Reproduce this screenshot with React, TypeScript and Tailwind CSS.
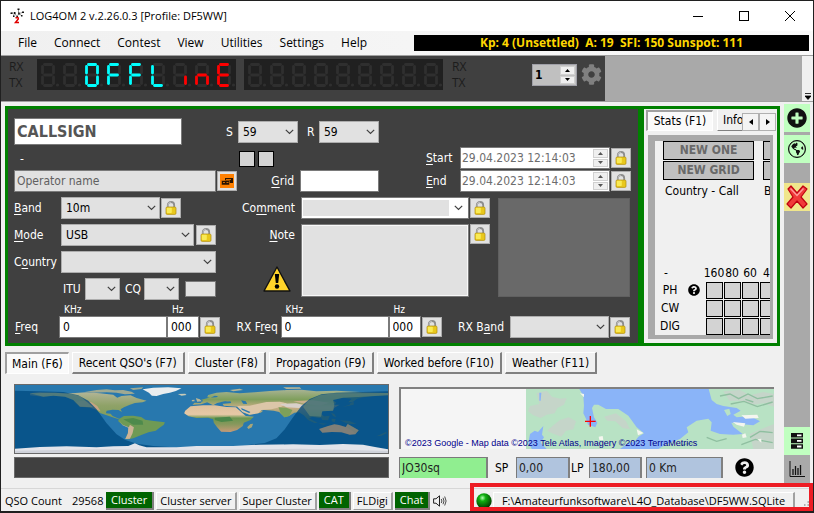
import React from "react";
import { FaCog, FaGlobeAmericas, FaPlusCircle, FaQuestionCircle } from "react-icons/fa";

const tahoma = "font-['DejaVu_Sans_Condensed','DejaVu_Sans',sans-serif]";
const segoe = "font-['Open_Sans','Noto_Sans',sans-serif]";

/* ---------- seven segment display ---------- */

const SEGMENTS: Record<string, string> = {
  a: "M3.5 1.5H10.5",
  b: "M12.5 3.5V10",
  c: "M12.5 14V20.5",
  d: "M3.5 22.5H10.5",
  e: "M1.5 14V20.5",
  f: "M1.5 3.5V10",
  g: "M3.5 12H10.5",
};

type Digit = { lit: string; color: string };

const OFFLINE: Digit[] = [
  { lit: "", color: "" },
  { lit: "", color: "" },
  { lit: "abcdef", color: "#00ffff" },
  { lit: "aefg", color: "#00ffff" },
  { lit: "aefg", color: "#00ffff" },
  { lit: "def", color: "#00ffff" },
  { lit: "c", color: "#ff0000" },
  { lit: "ceg", color: "#ff0000" },
  { lit: "adefg", color: "#ff0000" },
];
const BLANK: Digit[] = Array.from({ length: 9 }, () => ({ lit: "", color: "" }));

function SegmentDisplay({ digits, label }: { digits: Digit[]; label: string }) {
  return (
    <svg role="img" aria-label={label} width="199" height="31" viewBox="0 0 199 31" className="shrink-0 bg-[#202020]">
      {digits.map((d, i) => (
        <g key={i} transform={`translate(${4 + i * 22} 4)`} strokeWidth="2.8" strokeLinecap="round" fill="none">
          {Object.entries(SEGMENTS).map(([k, p]) => (
            <path key={k} d={p} stroke="#2f2f2f" />
          ))}
          <circle cx="16.5" cy="22" r="1.6" fill="#2f2f2f" />
          {Object.entries(SEGMENTS)
            .filter(([k]) => d.lit.includes(k))
            .map(([k, p]) => (
              <path key={k} d={p} stroke={d.color} />
            ))}
        </g>
      ))}
    </svg>
  );
}

/* ---------- small controls ---------- */

function LockButton({ label }: { label: string }) {
  return (
    <button type="button" aria-label={label} className="flex h-5 w-5 shrink-0 items-center justify-center border border-[#adadad] bg-[#e1e1e1]">
      <svg width="12" height="14" viewBox="0 0 12 14">
        <path d="M2.8 7V4.2a3.2 3.2 0 0 1 6.4 0V7" fill="none" stroke="#8d8d8d" strokeWidth="1.8" />
        <path d="M3 6.5V4.2a3 3 0 0 1 3-3" fill="none" stroke="#c9c9c9" strokeWidth=".8" />
        <rect x="1" y="6" width="10" height="7.4" rx="1.2" fill="#e9c81c" stroke="#b08c10" strokeWidth=".7" />
        <rect x="1.8" y="6.7" width="5" height="5.4" rx=".8" fill="#f9ea55" />
      </svg>
    </button>
  );
}

function Select({ id, value, className, label }: { id: string; value?: string; className: string; label?: string }) {
  return (
    <div className={`relative h-[22px] shrink-0 ${className}`}>
      <select
        id={id}
        aria-label={label}
        className="h-full w-full appearance-none border border-[#adadad] bg-[#e1e1e1] pl-1 text-xs leading-5 text-black"
      >
        <option>{value ?? ""}</option>
      </select>
      <svg className="pointer-events-none absolute top-[8px] right-[4px]" width="9" height="6" viewBox="0 0 9 6">
        <path d="M.8 .8L4.5 4.5L8.2 .8" fill="none" stroke="#404040" strokeWidth="1.2" />
      </svg>
    </div>
  );
}

function Spinner({ name, tall }: { name: string; tall?: boolean }) {
  const arrow = tall ? "#000" : "#555";
  return (
    <div className="flex w-[15px] shrink-0 flex-col gap-px">
      <button type="button" aria-label={`${name} up`} className="flex flex-1 items-center justify-center border border-[#d0d0d0] bg-[#efefef]">
        <svg width="5" height="3" viewBox="0 0 5 3"><path d="M2.5 0L5 3H0z" fill={arrow} /></svg>
      </button>
      <button type="button" aria-label={`${name} down`} className="flex flex-1 items-center justify-center border border-[#d0d0d0] bg-[#efefef]">
        <svg width="5" height="3" viewBox="0 0 5 3"><path d="M0 0H5L2.5 3z" fill={arrow} /></svg>
      </button>
    </div>
  );
}

function DateRow({ id, children }: { id: string; children: React.ReactNode }) {
  return (
    <div className="flex items-center">
      <label htmlFor={id} className="w-[34px]">{children}</label>
      <div className="mr-px flex h-[22px] w-[150px] border border-[#7a7a7a] bg-white p-px">
        <input id={id} defaultValue="29.04.2023 12:14:03" className="min-w-0 flex-1 bg-transparent text-xs text-[#6d6d6d]" />
        <Spinner name={id} />
      </div>
      <LockButton label={`Lock ${id}`} />
    </div>
  );
}

function Frequency({ id }: { id: string }) {
  return (
    <div className="flex items-end">
      <div className="flex w-[108px] flex-col">
        <label htmlFor={`${id}-khz`} className="pl-[5px] text-[10px] leading-3">KHz</label>
        <input id={`${id}-khz`} defaultValue="0" className="h-[22px] w-full border border-[#7a7a7a] bg-white pl-[3px] text-black" />
      </div>
      <div className="mr-px flex w-8 flex-col">
        <label htmlFor={`${id}-hz`} className="pl-[5px] text-[10px] leading-3">Hz</label>
        <input id={`${id}-hz`} defaultValue="000" className="h-[22px] w-full border border-[#7a7a7a] bg-white pl-[3px] text-black" />
      </div>
      <div className="flex h-[22px] items-center"><LockButton label={`Lock ${id}`} /></div>
    </div>
  );
}

const underline = "underline underline-offset-2";

/* ---------- window chrome ---------- */

function TitleBar() {
  return (
    <header className={`flex h-[30px] items-center bg-white text-black ${segoe}`}>
      <svg className="ml-[9px] shrink-0" width="16" height="16" viewBox="0 0 16 16" fill="none">
        <path d="M1 5H4.500L7 8.500L9 5.500L12.500 4.500M4.500 5L3.500 8M8.500 1V5.500L11.500 7.500" stroke="#777" strokeWidth=".8" />
        <path d="M.5 4.500h2v1.500h-2zM4 4h1.500v2H4zM3 7.500h1.500V9H3zM7.500 .5h2V2h-2zM8.200 4.500h1.500v2H8.200zM12 3.500h2v1.500h-2zM11 7h1.500v1.500H11zM6.500 8H8v2H6.500z" fill="#111" />
        <path d="M5.500 10Q8.500 8.500 8.300 11L5.500 14.500H9" stroke="#e00000" strokeWidth="1.500" />
      </svg>
      <h1 className="ml-1 flex-1 text-[11px]">LOG4OM 2 v.2.26.0.3 [Profile: DF5WW]</h1>
      <button aria-label="Minimize" className="flex h-full w-[46px] items-center justify-center">
        <svg width="10" height="10"><path d="M0 5.500H10" stroke="#000" /></svg>
      </button>
      <button aria-label="Maximize" className="flex h-full w-[46px] items-center justify-center">
        <svg width="10" height="10"><rect x=".5" y=".5" width="9" height="9" fill="none" stroke="#000" /></svg>
      </button>
      <button aria-label="Close" className="flex h-full w-[46px] items-center justify-center">
        <svg width="10" height="10"><path d="M0 0L10 10M10 0L0 10" stroke="#000" /></svg>
      </button>
    </header>
  );
}

function MenuBar() {
  return (
    <nav className={`flex h-6 items-center bg-gradient-to-r from-[#f0f0f0] to-[#fafafa] pl-[17px] text-xs text-black ${segoe}`}>
      <div className="flex w-[396px] shrink-0 gap-[17px]">
        {["File", "Connect", "Contest", "View", "Utilities", "Settings", "Help"].map((m) => (
          <button key={m}>{m}</button>
        ))}
      </div>
      <p className="mr-1 flex-1 bg-black text-center text-xs leading-4 font-bold whitespace-pre text-[#ffd700]">
        {"Kp: 4 (Unsettled)  A: 19  SFI: 150 Sunspot: 111"}
      </p>
    </nav>
  );
}

function RxTx() {
  return (
    <div className="text-xs leading-4 text-[#1c1c1c]">
      <p>RX</p>
      <p>TX</p>
    </div>
  );
}

function RadioStrip() {
  return (
    <section className="flex h-[47px] border-y border-[#a0a0a0] bg-[#a9a9a9]">
      <div className={`flex w-[604px] items-start bg-[#404040] pt-[3px] pl-2 ${segoe}`}>
        <div className="w-7"><RxTx /></div>
        <SegmentDisplay digits={OFFLINE} label="Offline" />
        <div className="w-2" />
        <SegmentDisplay digits={BLANK} label="Second receiver" />
        <div className="ml-[9px] flex-1"><RxTx /></div>
        <div className="mt-[5px] flex h-[22px] w-[45px] border border-[#a0a0a8] bg-[#c0c0c0] p-px">
          <input aria-label="Radio number" defaultValue="1" className={`min-w-0 flex-1 pl-px text-xs font-bold text-black ${tahoma}`} />
          <Spinner name="Radio" tall />
        </div>
        <button aria-label="Radio settings" className="mt-[5px] mr-[3px] ml-1"><FaCog size={21} color="#808080" /></button>
      </div>
      <div className="flex-1 rounded-br-sm" />
      <button aria-label="More" className="flex w-[11px] items-end justify-center bg-[#f0f0f0] pb-px">
        <svg width="6" height="7" viewBox="0 0 6 7"><path d="M0 .5H6M0 3H6L3 6.500z" stroke="#000" strokeWidth=".8" /></svg>
      </button>
    </section>
  );
}

/* ---------- log entry ---------- */

function EntryForm() {
  return (
    <form className="flex min-w-0 flex-1 flex-col bg-[#404040] pt-[9px] pr-[7px] pb-[5px] pl-[6px] text-xs text-white">
      <div className="flex h-[27px] items-center">
        <input
          aria-label="Callsign"
          defaultValue="CALLSIGN"
          className="h-full w-[168px] border border-[#7a7a7a] bg-white pl-[2px] text-base font-bold text-[#555]"
        />
        <label htmlFor="sent" className="ml-11 w-3">S</label>
        <Select id="sent" value="59" className="w-[60px]" />
        <label htmlFor="rcvd" className="ml-[9px] w-3">R</label>
        <Select id="rcvd" value="59" className="w-[60px]" />
      </div>

      <div className="mt-[2px] flex justify-between">
        <div className="w-[365px] shrink-0">
          <div className="flex h-[23px] items-center pt-px">
            <span className="w-[225px] pl-[6px]">-</span>
            <span className="mr-[3px] h-4 w-4 border border-black bg-[#d3d3d3]" />
            <span className="h-4 w-4 border border-black bg-[#d3d3d3]" />
          </div>
          <div className="flex items-center">
            <input
              aria-label="Operator name"
              placeholder="Operator name"
              className="h-[22px] w-[202px] border border-[#7a7a7a] bg-[#e1e1e1] pl-[2px] placeholder:text-[#606060]"
            />
            <button type="button" aria-label="Look up operator" className="ml-px flex h-5 w-5 items-center justify-center border border-[#adadad] bg-[#e1e1e1]">
              <svg width="14" height="14" viewBox="0 0 14 14">
                <rect width="14" height="14" fill="#ff8000" />
                <path d="M5 4h8v5H5z" fill="#2b1400" />
                <path d="M1.500 6.500h8v4.500h-8z" fill="#2b1400" stroke="#ff8000" strokeWidth=".5" />
                <path d="M6 5.500h5M3 8.500h2M6.500 8.500h2" stroke="#ff8000" strokeWidth=".8" />
              </svg>
            </button>
            <label htmlFor="grid" className="flex-1 pr-[6px] text-right"><span className={underline}>G</span>rid</label>
            <input id="grid" className="h-[22px] w-[79px] border border-[#7a7a7a] bg-white text-black" />
          </div>
        </div>
        <div className="flex flex-col gap-px">
          <DateRow id="Start"><span className={underline}>S</span>tart</DateRow>
          <DateRow id="End"><span className={underline}>E</span>nd</DateRow>
        </div>
      </div>

      <div className="mt-[5px] flex">
        <div className="mr-auto flex w-[202px] shrink-0 flex-col gap-[5px]">
          <div className="flex items-center">
            <label htmlFor="band" className="w-[47px]"><span className={underline}>B</span>and</label>
            <Select id="band" value="10m" className="mr-px w-[99px]" />
            <LockButton label="Lock band" />
          </div>
          <div className="flex items-center">
            <label htmlFor="mode" className="w-[47px]"><span className={underline}>M</span>ode</label>
            <Select id="mode" value="USB" className="mr-[2px] w-[133px]" />
            <LockButton label="Lock mode" />
          </div>
          <div className="flex items-center">
            <label htmlFor="country" className="w-[47px]">C<span className={underline}>o</span>untry</label>
            <Select id="country" className="w-[155px]" />
          </div>
          <div className="flex items-center">
            <label htmlFor="itu" className="w-[71px] pl-[49px]">ITU</label>
            <Select id="itu" className="w-[35px]" />
            <label htmlFor="cq" className="w-6 pl-[5px]">CQ</label>
            <Select id="cq" className="w-[35px]" />
            <input aria-label="Zone" className="ml-[6px] h-4 w-[31px] border border-[#7a7a7a] bg-[#e1e1e1]" />
          </div>
        </div>

        <div className="flex w-[252px] shrink-0 flex-col gap-[5px]">
          <div className="flex items-center">
            <label htmlFor="comment" className="w-[63px] pr-[6px] text-right whitespace-nowrap">Co<span className={underline}>m</span>ment</label>
            <div className="mr-px flex h-[22px] w-[168px] items-center border border-[#7a7a7a] bg-white pl-px">
              <input id="comment" className="h-4 w-[146px] bg-[#e1e1e1] text-black" />
              <button type="button" aria-label="Show comments" className="flex flex-1 justify-center">
                <svg width="9" height="6" viewBox="0 0 9 6">
                  <path d="M.8 .8L4.5 4.5L8.2 .8" fill="none" stroke="#404040" strokeWidth="1.2" />
                </svg>
              </button>
            </div>
            <LockButton label="Lock comment" />
          </div>
          <div className="flex">
            <div className="flex w-[63px] flex-col items-end pr-[6px]">
              <label htmlFor="note" className="leading-[22px]"><span className={underline}>N</span>ote</label>
              <svg className="mt-[20px] mr-[4px]" width="28" height="26" viewBox="0 0 28 26">
                <path d="M14 1L27 25H1z" fill="#ffd42a" stroke="#111" strokeWidth="1.4" strokeLinejoin="round" />
                <path d="M11.800 8h4.400l-1 9h-2.400z" fill="#000" />
                <circle cx="14" cy="20.500" r="2.200" fill="#000" />
              </svg>
            </div>
            <textarea id="note" className="mr-px h-[73px] w-[168px] resize-none border-2 border-[#f8f8f8] bg-[#e1e1e1] text-black outline-1 -outline-offset-1 outline-[#7a7a7a]" />
            <LockButton label="Lock note" />
          </div>
        </div>

        <div className="mt-px mr-px ml-2 h-[99px] w-[132px] border border-[#606060] bg-[#696969]" />
      </div>

      <div className="mt-1 flex items-end justify-between">
        <div className="flex items-end">
          <label htmlFor="freq-khz" className="w-[45px] pl-px leading-[22px]"><span className={underline}>F</span>req</label>
          <Frequency id="freq" />
        </div>
        <div className="flex items-end">
          <label htmlFor="rx-khz" className="w-[44px] leading-[22px] whitespace-nowrap">RX F<span className={underline}>r</span>eq</label>
          <Frequency id="rx" />
        </div>
        <div className="mr-px flex items-center">
          <label htmlFor="rx-band" className="w-[52px] whitespace-nowrap">RX B<span className={underline}>a</span>nd</label>
          <Select id="rx-band" className="mr-px w-[99px]" />
          <LockButton label="Lock RX band" />
        </div>
      </div>
    </form>
  );
}

/* ---------- statistics ---------- */

const pressedTab =
  "border-t-2 border-l-2 border-[#a0a0a0] border-r border-b border-r-white border-b-white bg-[#fafafa]";
const raisedTab =
  "border-t border-l border-t-white border-l-white border-r-2 border-b-2 border-r-[#808080] border-b-[#808080] bg-[#f0f0f0]";

function StatsPanel() {
  const bands = ["160", "80", "60", "4"];
  return (
    <section className="flex w-[133px] shrink-0 flex-col bg-[#f0f0f0] pt-px text-xs text-black">
      <div className="flex h-[21px] pl-[2px]">
        <button className={`w-[67px] whitespace-nowrap ${pressedTab}`}>Stats (F1)</button>
        <button className="ml-1 w-[25px] overflow-hidden border-b border-l border-b-[#808080] border-l-white pl-[5px] text-left">Info</button>
        <button aria-label="Scroll tabs left" className="mt-[3px] flex w-[17px] items-center justify-center border border-[#b0b0b0] bg-[#f4f4f4]">
          <svg width="4" height="6"><path d="M4 0V6L0 3z" /></svg>
        </button>
        <button aria-label="Scroll tabs right" className="mt-[3px] flex w-[17px] items-center justify-center border border-[#b0b0b0] bg-[#f4f4f4]">
          <svg width="4" height="6"><path d="M0 0V6L4 3z" /></svg>
        </button>
      </div>
      <div className="m-1 flex flex-1 flex-col overflow-hidden border-t-[6px] border-r-[3px] border-b-[4px] border-l-[7px] border-[#a9a9a9]">
        <div className="grid w-[200px] grid-cols-[91px_91px] gap-x-[9px] gap-y-px pl-2 text-center font-bold text-[#696969]">
          {["NEW ONE", "", "NEW GRID", ""].map((t, i) => (
            <span key={i} className="h-[19px] border border-black bg-[#c0c0c0] leading-[17px]">{t}</span>
          ))}
        </div>
        <div className="flex pt-[3px] pl-[10px] whitespace-nowrap">
          <span className="w-[99px] shrink-0">Country - Call</span>
          <span>B</span>
        </div>
        <table className="mt-auto w-[122px] table-fixed">
          <thead>
            <tr className="h-4 text-left">
              <th className="w-[30px] pl-[9px] font-normal">-</th>
              <th className="w-[20px]" />
              {bands.map((b) => (
                <th key={b} className={`w-[18px] font-normal ${b === "4" ? "pl-1 text-left" : "text-center"}`}>
                  <span className={b === "160" ? "-mx-1" : ""}>{b}</span>
                </th>
              ))}
            </tr>
          </thead>
          <tbody>
            {["PH", "CW", "DIG"].map((m) => (
              <tr key={m} className="h-[18px]">
                <th className="text-center font-normal">{m}</th>
                <td>{m === "PH" && <FaQuestionCircle size={12} className="ml-[3px]" />}</td>
                {bands.map((b) => (
                  <td key={b}><span className="ml-px block h-[17px] w-[17px] border border-black bg-[#d3d3d3]" /></td>
                ))}
              </tr>
            ))}
          </tbody>
        </table>
      </div>
    </section>
  );
}

/* ---------- maps ---------- */

function WorldMap() {
  return (
    <svg role="img" aria-label="World map with day and night" className="block h-[70px] w-full border border-[#696969]" viewBox="45 45 1120 204" preserveAspectRatio="none">
      <defs>
        <linearGradient id="america" x1="0" y1="0" x2="0" y2="1">
          <stop offset="0" stopColor="#b3b597" />
          <stop offset=".5" stopColor="#8fa268" />
          <stop offset="1" stopColor="#7f9c5a" />
        </linearGradient>
        <linearGradient id="africa" x1="0" y1="0" x2="0" y2="1">
          <stop offset="0" stopColor="#dcc09c" />
          <stop offset=".34" stopColor="#e6c8a6" />
          <stop offset=".48" stopColor="#6d9750" />
          <stop offset=".7" stopColor="#86985c" />
          <stop offset="1" stopColor="#c79a78" />
        </linearGradient>
        <linearGradient id="asia" x1="0" y1="0" x2="0" y2="1">
          <stop offset="0" stopColor="#a9b393" />
          <stop offset=".3" stopColor="#7f9f5c" />
          <stop offset=".55" stopColor="#c9ae86" />
          <stop offset="1" stopColor="#6d934c" />
        </linearGradient>
      </defs>
      <rect x="45" y="45" width="1120" height="204" fill="#2878ae" />
      <path fill="url(#america)" d="M90 70L120 66L165 68L215 70L260 67L300 70L340 74L352 83L365 78L392 76L410 84L440 92L428 97L405 99L390 104L372 112L362 118L366 126L356 120L338 119L320 122L318 130L332 131L338 138L350 143L360 146L352 146L338 142L318 135L300 129L285 118L270 113L240 110L228 100L220 90L195 80L160 77L130 80L90 76z" />
      <path fill="#c6a582" d="M228 95L250 92L275 97L292 108L302 124L285 118L270 112L240 110z" />
      <path fill="#9fa992" d="M255 66L290 60L320 58L345 61L370 60L395 65L405 71L375 73L350 68L320 67L280 68zM390 55L430 52L425 57L400 60z" />
      <path fill="#e9edef" d="M428 58L460 53L505 52L545 55L528 63L510 68L490 72L470 78L456 77L447 68z" />
      <path fill="#c7cbb8" d="M534 72L556 71L560 75L545 77z" />
      <path fill="#6f9a55" d="M356 148L372 138L400 137L424 141L436 149L462 153L495 157L492 164L478 174L468 182L446 187L432 192L415 199L400 205L386 208L376 207L384 190L387 172L368 165L355 154z" />
      <path fill="#4e8a4c" d="M370 148L400 144L428 152L430 164L400 164z" />
      <path fill="#cdb396" d="M357 150L368 164L387 172L390 164L402 172L398 190L390 206L376 207L384 190L385 173L368 166z" />
      <path fill="url(#africa)" d="M556 122L572 109L610 106L645 106L680 111L708 112L725 127L738 138L762 140L752 150L732 158L729 168L712 180L692 186L664 185L652 172L642 158L640 148L625 143L590 144L566 139L553 130z" />
      <path fill="#4b8749" d="M645 143L690 140L700 152L665 156L645 150z" />
      <path fill="#a9a678" d="M742 172L752 162L760 161L756 172L746 177z" />
      <path fill="url(#asia)" d="M578 104L584 98L602 99L610 92L604 89L628 83L650 82L655 79L645 77L632 83L622 82L625 75L650 68L680 66L720 70L765 67L810 63L860 60L905 59L950 64L1010 62L1080 66L1165 69L1165 76L1120 78L1090 82L1072 86L1060 95L1046 97L1056 86L1030 83L1000 90L1010 99L1000 104L1020 104L1004 113L1000 122L968 124L964 132L974 140L958 144L938 140L928 145L940 157L925 150L912 136L898 127L884 128L868 138L854 142L838 126L822 122L795 120L770 118L790 122L783 128L748 134L728 126L712 110L672 107L668 101L694 99L676 94L652 99L640 106L622 97L604 103z" />
      <path fill="#dcc6a8" d="M712 108L750 107L800 96L840 95L862 100L845 110L815 118L785 120L776 130L750 134L728 126z" />
      <path fill="#d8d0ca" d="M840 102L890 100L914 106L898 114L860 112z" />
      <path fill="#cbb18b" d="M880 94L940 91L988 98L960 107L920 102z" />
      <path fill="#7da05a" d="M836 112L860 113L878 120L868 138L854 142L842 128z" />
      <path fill="#2878ae" d="M724 114L752 126L748 129L726 119zM724 91L738 94L742 102L730 101zM662 96L692 94L694 99L668 100z" />
      <path fill="#b7b596" d="M588 84L600 88L606 94L592 95zM576 90L584 89L584 94L576 94zM690 60L720 56L730 60L700 64zM850 52L900 52L905 56L860 57z" />
      <path fill="#c39a74" d="M958 177L985 168L1004 163L1018 165L1038 171L1044 162L1060 171L1077 181L1067 193L1050 194L1025 187L996 186L968 188z" />
      <path fill="#7e9464" d="M1038 170L1045 162L1060 171L1077 181L1067 193L1060 184zM962 140L990 137L985 151L968 150zM925 144L954 158L944 159L925 149zM955 159L982 161L970 164zM996 146L1008 147L1005 157L996 154zM1020 151L1050 153L1070 162L1046 162zM994 128L1004 132L1010 142L1000 138zM1130 199L1144 193L1158 186L1162 189L1145 197zM1052 98L1062 95L1062 104L1040 109L1028 111L1050 104z" />
      <path fill="#004a80" fillOpacity=".76" d="M45 62L110 64L190 66L235 76L265 92L290 118L320 160L350 193L375 209L410 221L460 228L520 232L420 236L45 240z" />
      <path fill="#004a80" fillOpacity=".76" d="M1165 64L1090 66L1010 68L965 73L930 87L905 108L880 142L855 178L830 205L795 219L740 226L860 230L1165 240z" />
      <path fill="#8fa070" fillOpacity=".4" d="M90 70L165 68L215 72L240 78L280 112L240 110L220 90L195 80L160 77L130 80zM1165 69L1000 70L960 76L925 92L910 110L930 138L964 140L968 124L1000 122L1004 104L1000 90L1030 83L1090 80L1165 76z" />
      <path fill="#c39a74" fillOpacity=".55" d="M958 177L985 168L1004 163L1018 165L1038 171L1044 162L1060 171L1077 181L1067 193L1050 194L1025 187L996 186L968 188z" />
      <path fill="#e2e4ea" d="M45 236L120 231L200 229L290 232L340 229L385 228L405 220L418 226L440 232L530 232L590 228L700 228L780 224L880 223L960 225L1030 222L1090 224L1130 232L1165 238V249H45z" />
      <path fill="#c3c7ce" d="M45 242L300 238L600 240L900 236L1165 243V249H45z" opacity=".6" />
    </svg>
  );
}

function LocationMap() {
  return (
    <div className="relative h-[62px] border-t-2 border-l-2 border-[#808080] bg-[#f5f5f5]">
      <svg role="img" aria-label="Location map" className="block h-full w-full" viewBox="-357 15 1119 180" preserveAspectRatio="none">
        <rect x="18" y="15" width="744" height="180" fill="#8ab4f8" />
        <path fill="#b8e2c4" d="M18 15H178L190 35L192 65L190 88L198 104L204 122L226 130L232 116L222 100L216 72L222 62L235 62L258 75L295 75L325 95L350 130L372 148L355 158L345 172L320 180L300 195H18z" />
        <path fill="#b8e2c4" d="M415 195L440 180L480 165L505 145L500 130L530 110L565 104L575 115L572 140L600 150L640 152L668 150L640 128L634 116L660 120L700 124L720 112L690 96L650 100L640 92L662 80L650 72L610 66L590 60L575 48L566 15H762V195z" />
        <path fill="#b8e2c4" d="M612 78L628 74L632 90L622 96z" />
        <g fill="#c5d5c9">
          <path d="M50 28L80 20L96 38L120 44L140 42L132 62L112 72L104 88L80 92L62 102L40 94L24 82L30 66L58 60zM120 108L146 100L168 112L160 136L138 140L124 158L96 148L82 140L100 124zM252 98L288 88L318 112L330 136L308 132L286 112L262 110z" />
          <path d="M610 22L660 18L690 34L730 24L762 30V68L730 58L700 62L660 50L628 50zM690 150L726 134L762 120V195H700z" />
        </g>
        <g fill="none" stroke="#8fbfa0" strokeWidth="4">
          <path d="M600 36L630 30L656 44L684 30L712 44L758 36M632 60L672 52L712 68L758 54M676 46L700 54M560 160L590 172L620 164M690 160L720 142L758 146M664 182L706 166L758 176M480 184L520 176" />
        </g>
        <path fill="#f4f6ef" d="M350 136L370 147L354 154zM180 28L192 30L192 40zM664 94L712 92L716 102L676 104zM638 114L676 118L672 128L650 122zM666 152L676 148L680 160L668 162zM236 158L248 156L250 168L238 168zM712 166L724 164L724 176z" />
        <path fill="#8ab4f8" d="M25 178L30 150L44 140L54 144L70 126L66 152L72 160L62 176L80 195H36zM58 26L64 26L62 50L58 50z" />
        <path stroke="#ff0000" strokeWidth="4" d="M195 112H227M211 96V128" />
      </svg>
      <p className="absolute bottom-0 left-[4px] font-['Liberation_Sans',sans-serif] text-[9px] leading-[12px] whitespace-nowrap text-[#00008b]">
        ©2023 Google - Map data ©2023 Tele Atlas, Imagery ©2023 TerraMetrics
      </p>
    </div>
  );
}

const sunken = "h-[21px] border-t border-l border-r-2 border-[#7a7a7a] border-r-[#808080] pl-[2px] text-xs text-[#222]";

function Maps() {
  return (
    <div className="mt-[10px] mr-[6px] ml-[9px] flex gap-[10px] text-black">
      <div className="flex-1">
        <WorldMap />
        <div className="mt-[3px] h-[21px] border border-[#696969] bg-[#404040]" />
      </div>
      <div className="flex-1 pt-[3px]">
        <LocationMap />
        <div className="mt-2 flex items-center text-xs">
          <input aria-label="Locator" defaultValue="JO30sq" className={`w-[89px] bg-[#90ee90] ${sunken}`} />
          <label htmlFor="sp" className="w-[28px] pl-[7px]">SP</label>
          <input id="sp" defaultValue="0,00" className={`w-[54px] bg-[#b0c4de] ${sunken}`} />
          <label htmlFor="lp" className="w-[19px] pl-px">LP</label>
          <input id="lp" defaultValue="180,00" className={`w-[53px] bg-[#b0c4de] ${sunken}`} />
          <input aria-label="Distance" defaultValue="0 Km" className={`ml-1 w-[77px] bg-[#b0c4de] ${sunken}`} />
          <button aria-label="Help" className="ml-3"><FaQuestionCircle size={19} color="#000" /></button>
        </div>
      </div>
    </div>
  );
}

/* ---------- side bar ---------- */

function SideBar() {
  return (
    <aside className="mt-[2px] mr-[3px] ml-1 flex w-[26px] shrink-0 flex-col bg-[#a9a9a9]">
      <button aria-label="Add contact" className="flex h-7 items-center justify-center bg-[#c0ffc0]"><FaPlusCircle size={20} color="#111" /></button>
      <button aria-label="Web lookup" className="mt-[3px] flex h-7 items-center justify-center bg-[#c0ffc0]">
        <span className="flex rounded-full border border-[#111] bg-[#111]">
          <FaGlobeAmericas size={16} color="#c0ffc0" />
        </span>
      </button>
      <button aria-label="Clear" className="mt-5 flex h-7 items-center justify-center bg-[#f0e68c]">
        <svg width="22" height="24" viewBox="0 0 22 24">
          <path d="M2 4L5 1L11 8L17 1L21 4L15 12L21 19L17 23L11 16L5 23L1 19L7 12z" fill="#f03a3a" stroke="#c00010" strokeWidth="1.2" strokeLinejoin="round" />
          <path d="M4.500 3.500L11 10.500L17.500 3.500" fill="none" stroke="#ff9a9a" strokeWidth="1.5" />
        </svg>
      </button>
      <button aria-label="Clusters" className="mt-auto flex h-7 items-center justify-center bg-[#c0ffc0]">
        <svg width="12" height="16" viewBox="0 0 12 16">
          <path d="M0 0h12v4.600H0zM0 5.600h12v4.600H0zM0 11.200h12v4.600H0z" fill="#111" />
          <path d="M6 2.300h4.500M6 7.900h4.500M6 13.500h4.500" stroke="#fff" strokeWidth="1.800" />
        </svg>
      </button>
      <button aria-label="Statistics" className="flex h-7 items-center justify-center">
        <svg width="16" height="16" viewBox="0 0 16 16" fill="none" stroke="#111">
          <path d="M1 0V15.500H16" strokeWidth="1" />
          <path d="M4 14V8M6.500 14V5M9 14V7M11.500 14V4" strokeWidth="1.300" />
        </svg>
      </button>
    </aside>
  );
}

/* ---------- status bar ---------- */

const statusOn = "h-[18px] border-r-2 border-b-2 border-[#808080] bg-[#006400] px-[5px] text-white";
const statusOff = "h-[18px] border-t border-l border-r-2 border-b border-t-white border-l-white border-r-[#a0a0a0] border-b-[#a0a0a0] px-[3px]";

function StatusBar() {
  return (
    <footer className={`relative flex h-[23px] shrink-0 items-center border-t border-[#d7d7d7] bg-[#f0f0f0] pt-[2px] pl-1 text-[11px] leading-4 whitespace-nowrap text-black ${segoe}`}>
      <span className="w-[67px] shrink-0">QSO Count</span>
      <span className="w-[34px] shrink-0">29568</span>
      <div className="flex flex-1 items-center gap-[2px]">
        <button className={statusOn}>Cluster</button>
        <button className={statusOff}>Cluster server</button>
        <button className={statusOff}>Super Cluster</button>
        <button className={statusOn}>CAT</button>
        <button className={statusOff}>FLDigi</button>
        <button className={statusOn}>Chat</button>
        <button aria-label="Sound" className="pl-px">
          <svg width="14" height="12" viewBox="0 0 14 12" fill="none" stroke="#222">
            <path d="M.6 3.800H3L6.500 .8V11.200L3 8.200H.6z" />
            <path d="M8.300 4Q9.500 6 8.300 8M10 2.800Q12 6 10 9.200M11.700 1.500Q14.500 6 11.700 10.500" strokeWidth=".8" />
          </svg>
        </button>
      </div>
      <svg className="mr-px shrink-0" width="16" height="16" viewBox="0 0 16 16">
        <defs>
          <radialGradient id="led" cx=".4" cy=".3" r=".7">
            <stop offset="0" stopColor="#b8ffb8" />
            <stop offset=".3" stopColor="#10b010" />
            <stop offset="1" stopColor="#003800" />
          </radialGradient>
        </defs>
        <circle cx="8" cy="8" r="7.700" fill="url(#led)" />
      </svg>
      <button className={`mr-[18px] w-[302px] text-center ${statusOff}`}>F:\Amateurfunksoftware\L4O_Database\DF5WW.SQLite</button>
      <svg className="absolute right-[4px] bottom-[5px]" width="5" height="5"><path d="M0 4h1.500M3.500 4H5M3.500 1H5" stroke="#999" strokeWidth="1.500" /></svg>
      <div className="pointer-events-none absolute -top-[6px] right-0 bottom-0 w-[343px] border-4 border-[#ed1c24]" />
    </footer>
  );
}

/* ---------- page ---------- */

const tabs = ["Main (F6)", "Recent QSO's (F7)", "Cluster (F8)", "Propagation (F9)", "Worked before (F10)", "Weather (F11)"];

export default function App() {
  return (
    <div className={`flex min-h-screen flex-col border-x border-t border-b-2 border-[#202020] bg-[#f0f0f0] ${tahoma}`}>
      <TitleBar />
      <MenuBar />
      <RadioStrip />
      <main className="flex flex-1 pb-[5px] pl-1">
        <div className="flex min-w-0 flex-1 flex-col">
          <div className="mt-1 flex gap-[6px] border-[3px] border-[#008000] bg-[#008000]">
            <EntryForm />
            <StatsPanel />
          </div>
          <div className="mt-[6px] flex gap-[3px] text-xs text-black">
            {tabs.map((t, i) => (
              <button key={t} className={`h-[22px] whitespace-nowrap ${i === 0 ? `px-[5px] ${pressedTab}` : `px-[6px] ${raisedTab}`}`}>{t}</button>
            ))}
          </div>
          <Maps />
        </div>
        <SideBar />
      </main>
      <StatusBar />
    </div>
  );
}
